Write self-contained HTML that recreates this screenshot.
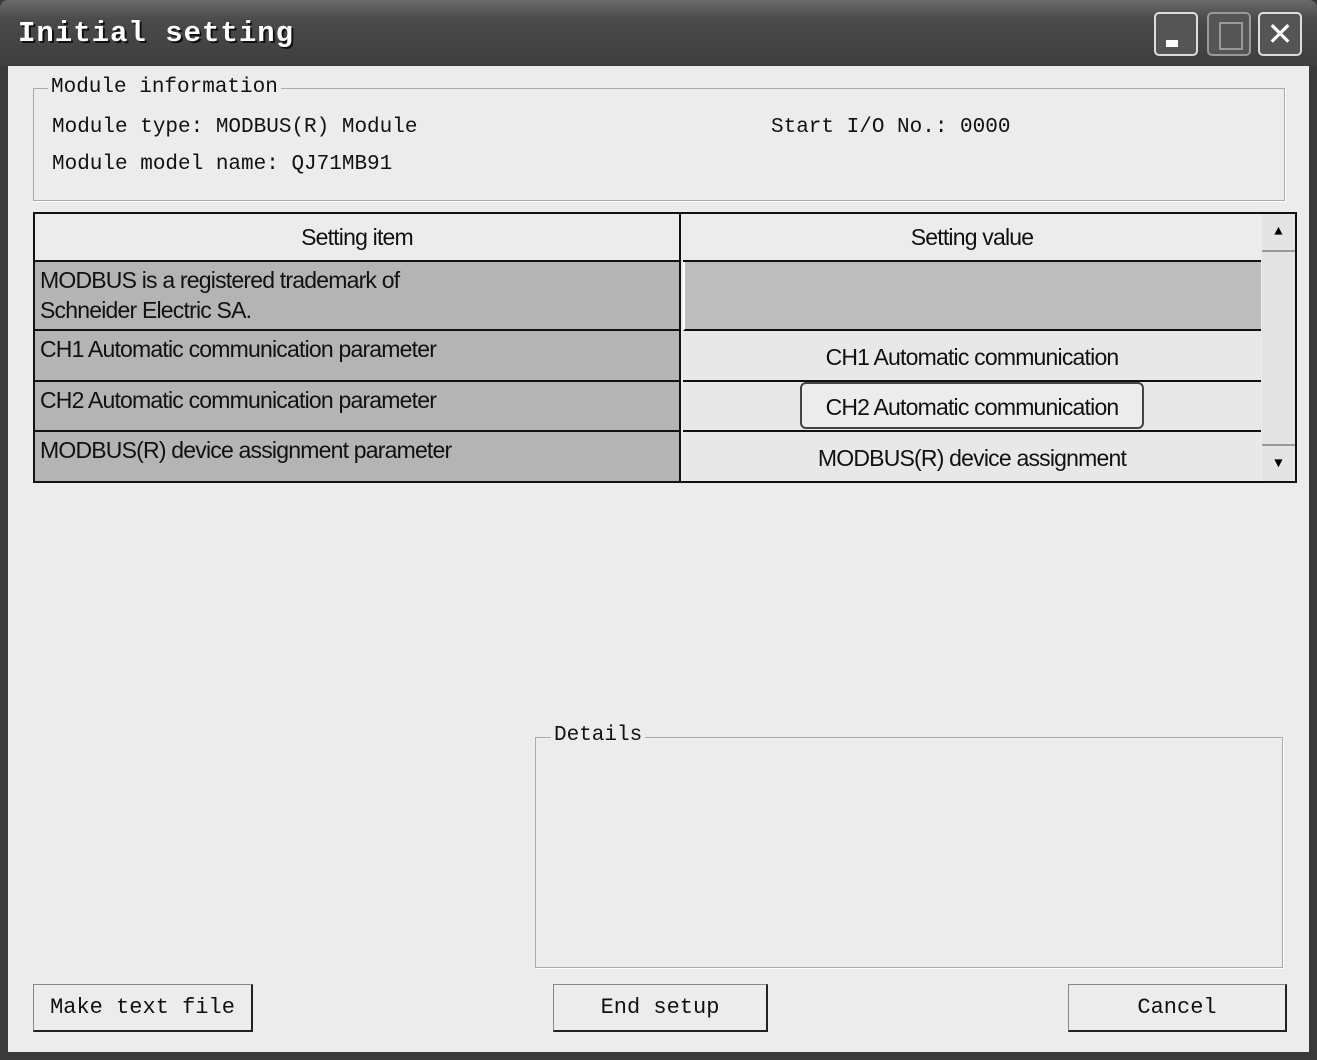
<html><head><style>
body{margin:0;width:1317px;height:1060px;background:#3a3a3a;position:relative;overflow:hidden;font-family:"Liberation Mono","Noto Sans CJK SC",monospace}
.a{position:absolute}
.title{left:0;top:0;width:1317px;height:66px;background:linear-gradient(#6a6a6a,#4a4a4a 30%,#3e3e3e);border-radius:8px 8px 0 0}
.tt{left:18px;top:17px;color:#fff;font:bold 29px "Liberation Mono",monospace;letter-spacing:1px;text-shadow:2px 2px 0 #111}
.btn{top:12px;width:44px;height:44px;border:2px solid #ddd;border-radius:5px;background:#555;box-sizing:border-box}
.client{left:8px;top:66px;width:1301px;height:986px;background:#ececec}
.grp{border:1px solid #aaa;box-shadow:1px 1px 0 #fff}
.lbl{background:#ececec;font-size:21px;color:#111;padding:0 3px}
.t{font-size:21px;color:#111}
.s{font-family:"Liberation Sans",sans-serif;font-size:23px;color:#111;letter-spacing:-0.8px}
.cell{box-sizing:border-box;border-bottom:2px solid #111}
.pb{background:#ececec;border:1px solid #888;border-right:2px solid #222;border-bottom:2px solid #222;box-sizing:border-box;text-align:center;font-size:22px;color:#111}
</style></head><body>
<div class="a title"></div>
<div class="a tt">Initial setting</div>
<div class="a btn" style="left:1154px"><div class="a" style="left:10px;top:26px;width:12px;height:7px;background:#fff"></div></div>
<div class="a btn" style="left:1207px;border-color:#999"><div class="a" style="left:10px;top:8px;width:20px;height:24px;border:2px solid #999"></div></div>
<div class="a btn" style="left:1258px;font:32px 'Liberation Sans';color:#fff;text-align:center;line-height:40px">✕</div>
<div class="a client"></div>
<div class="a grp" style="left:33px;top:88px;width:1250px;height:111px"></div>
<div class="a lbl" style="left:48px;top:76px">Module information</div>
<div class="a t" style="left:52px;top:116px">Module type: MODBUS(R) Module</div>
<div class="a t" style="left:771px;top:116px">Start I/O No.: 0000</div>
<div class="a t" style="left:52px;top:153px">Module model name: QJ71MB91</div>

<div class="a" style="left:33px;top:212px;width:1264px;height:271px;border:2px solid #111;box-sizing:border-box;background:#ececec"></div>
<div class="a cell s" style="left:35px;top:214px;width:646px;height:48px;border-right:2px solid #111;text-align:center;line-height:46px">Setting item</div>
<div class="a cell s" style="left:683px;top:214px;width:578px;height:48px;text-align:center;line-height:46px">Setting value</div>
<div class="a cell s" style="left:35px;top:262px;width:646px;height:69px;background:#b4b4b4;border-right:2px solid #111;padding:3px 5px;line-height:30px">MODBUS is a registered trademark of<br>Schneider Electric SA.</div>
<div class="a cell" style="left:683px;top:262px;width:578px;height:69px;background:#bdbdbd;border-left:2px solid #fff"></div>
<div class="a cell s" style="left:35px;top:331px;width:646px;height:51px;background:#b4b4b4;border-right:2px solid #111;padding:5px 5px">CH1 Automatic communication parameter</div>
<div class="a cell s" style="left:683px;top:331px;width:578px;height:51px;background:#e8e8e8;text-align:center;line-height:52px">CH1 Automatic communication</div>
<div class="a cell s" style="left:35px;top:382px;width:646px;height:50px;background:#b4b4b4;border-right:2px solid #111;padding:5px 5px">CH2 Automatic communication parameter</div>
<div class="a cell s" style="left:683px;top:382px;width:578px;height:50px;background:#e8e8e8"></div>
<div class="a s" style="left:800px;top:382px;width:344px;height:47px;border:2px solid #444;border-radius:6px;text-align:center;line-height:46px;box-sizing:border-box;background:#ececec">CH2 Automatic communication</div>
<div class="a s" style="left:35px;top:432px;width:646px;height:49px;background:#b4b4b4;border-right:2px solid #111;box-sizing:border-box;padding:5px 5px">MODBUS(R) device assignment parameter</div>
<div class="a s" style="left:683px;top:432px;width:578px;height:49px;background:#e8e8e8;text-align:center;line-height:52px">MODBUS(R) device assignment</div>
<div class="a" style="left:1262px;top:214px;width:33px;height:267px;background:#e4e4e4"></div>
<div class="a" style="left:1262px;top:214px;width:33px;height:36px;border-bottom:2px solid #999;text-align:center;font-size:14px;line-height:36px">▲</div>
<div class="a" style="left:1262px;top:444px;width:33px;height:37px;border-top:2px solid #999;text-align:center;font-size:14px;line-height:37px">▼</div>

<div class="a grp" style="left:535px;top:737px;width:746px;height:229px"></div>
<div class="a lbl" style="left:551px;top:724px">Details</div>

<div class="a pb" style="left:33px;top:984px;width:220px;height:48px;line-height:46px">Make text file</div>
<div class="a pb" style="left:553px;top:984px;width:215px;height:48px;line-height:46px">End setup</div>
<div class="a pb" style="left:1068px;top:984px;width:219px;height:48px;line-height:46px">Cancel</div>
</body></html>
